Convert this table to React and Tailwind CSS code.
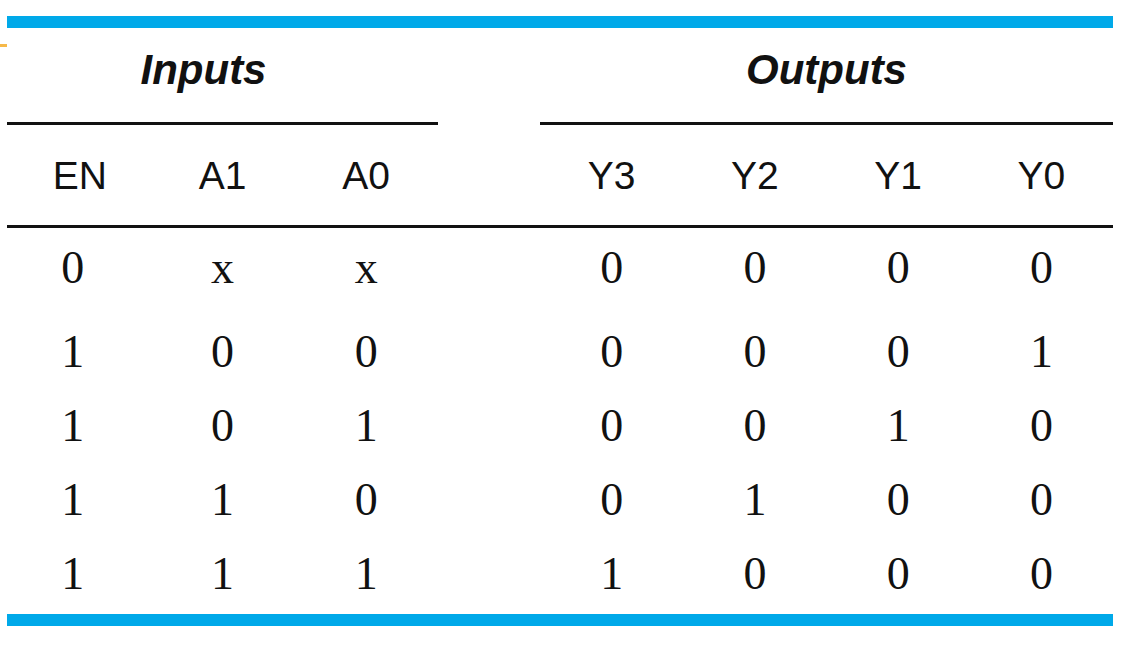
import React from "react";

const inputs = ["EN", "A1", "A0"];
const outputs = ["Y3", "Y2", "Y1", "Y0"];
const rows = [
  [["0", "x", "x"], ["0", "0", "0", "0"]],
  [["1", "0", "0"], ["0", "0", "0", "1"]],
  [["1", "0", "1"], ["0", "0", "1", "0"]],
  [["1", "1", "0"], ["0", "1", "0", "0"]],
  [["1", "1", "1"], ["1", "0", "0", "0"]],
];

const sans = { fontFamily: '"Liberation Sans", Arial, sans-serif' };
const serif = { fontFamily: '"Liberation Serif", "Times New Roman", serif' };

function Row({ left, right, className, style, firstPad }) {
  return (
    <div className={"flex " + className} style={style}>
      <div className="grid w-[431px] grid-cols-3">
        {left.map((v, i) => (
          <div
            key={i}
            className={
              "flex items-center justify-center " +
              (i === 0 ? firstPad : "")
            }
          >
            {v}
          </div>
        ))}
      </div>
      <div className="w-[102px]" />
      <div className="grid w-[573px] grid-cols-4">
        {right.map((v, i) => (
          <div key={i} className="flex items-center justify-center">{v}</div>
        ))}
      </div>
    </div>
  );
}

export default function App() {
  return (
    <div className="relative h-[656px] w-[1131px] overflow-hidden bg-white pl-[7px] pt-[16px] text-[#111]">
      <div className="absolute left-0 top-[44px] h-[3px] w-[7px] bg-[#f6b949]" />
      <div className="h-[12px] w-[1106px] bg-[#00a9e9]" />
      <div className="flex h-[94px] w-[1106px] pb-[10px]" style={sans}>
        <div className="flex w-[431px] items-center justify-center pr-[38px] text-[42px] font-bold italic leading-none">
          Inputs
        </div>
        <div className="w-[102px]" />
        <div className="flex w-[573px] items-center justify-center text-[42px] font-bold italic leading-none">
          Outputs
        </div>
      </div>
      <div className="flex w-[1106px]">
        <div className="h-[3px] w-[431px] bg-[#111]" />
        <div className="w-[102px]" />
        <div className="h-[3px] w-[573px] bg-[#111]" />
      </div>
      <Row
        left={inputs}
        right={outputs}
        className="h-[100px] w-[1106px] text-[39px] leading-none"
        style={sans}
        firstPad="pl-[2px]"
      />
      <div className="h-[3px] w-[1106px] bg-[#111]" />
      <div style={serif} className="text-[46px] leading-none">
        {rows.map((r, i) => (
          <Row
            key={i}
            left={r[0]}
            right={r[1]}
            firstPad="pr-[12px]"
            className={i === 0 ? "h-[87px] w-[1106px] pb-[7px]" : "h-[74px] w-[1106px]"}
          />
        ))}
      </div>
      <div className="mt-[3px] h-[12px] w-[1106px] bg-[#00a9e9]" />
    </div>
  );
}
